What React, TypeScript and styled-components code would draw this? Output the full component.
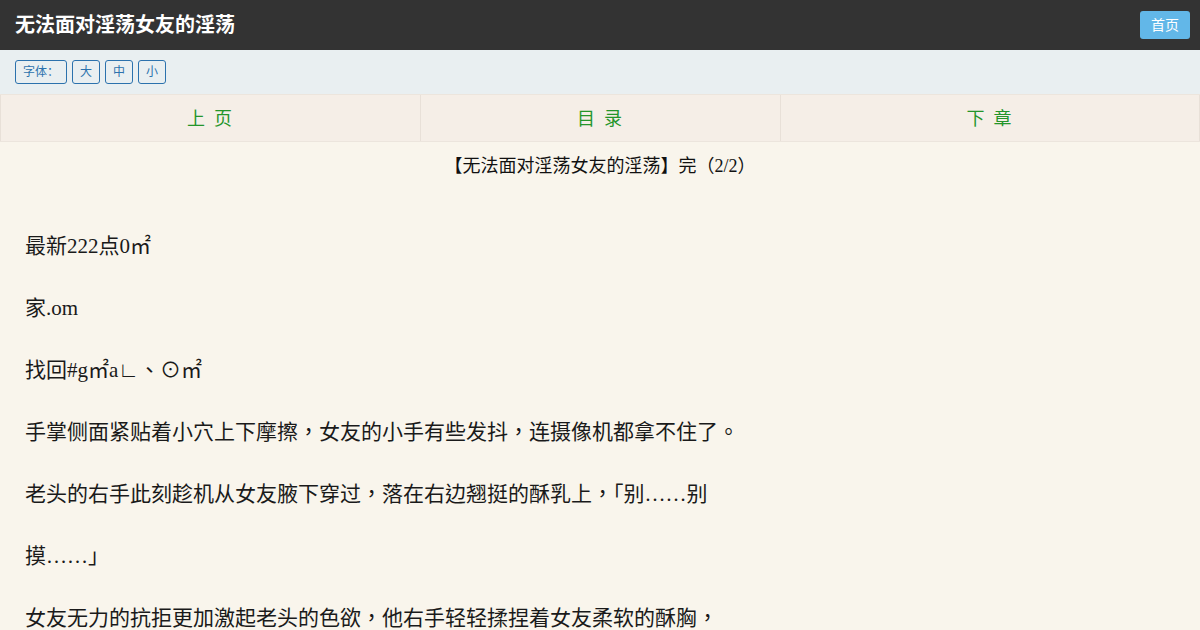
import React from "react";
import styled, { createGlobalStyle } from "styled-components";

const GlobalStyle = createGlobalStyle`
  html, body {
    margin: 0;
    padding: 0;
    background: #f9f5ec;
  }
  body {
    font-family: "Liberation Sans", "Noto Sans CJK SC", sans-serif;
  }
`;

const lines = [
  "最新222点0㎡",
  "家.om",
  "找回#g㎡a∟、⊙㎡",
  "手掌侧面紧贴着小穴上下摩擦，女友的小手有些发抖，连摄像机都拿不住了。",
  "老头的右手此刻趁机从女友腋下穿过，落在右边翘挺的酥乳上，「别……别",
  "摸……」",
  "女友无力的抗拒更加激起老头的色欲，他右手轻轻揉捏着女友柔软的酥胸，",
];

const App = () => {
  return (
    <Page>
      <GlobalStyle />
      <Header>
        <Title>无法面对淫荡女友的淫荡</Title>
        <HomeButton>首页</HomeButton>
      </Header>
      <Toolbar>
        <FontButton>字体：</FontButton>
        <FontButton>大</FontButton>
        <FontButton>中</FontButton>
        <FontButton>小</FontButton>
      </Toolbar>
      <NavBar>
        <NavCell>上 页</NavCell>
        <NavCell>目 录</NavCell>
        <NavCell>下 章</NavCell>
      </NavBar>
      <ChapterTitle>【无法面对淫荡女友的淫荡】完（2/2）</ChapterTitle>
      <Content>
        {lines.map((line, i) => (
          <Line key={i}>{line}</Line>
        ))}
      </Content>
    </Page>
  );
};

const Page = styled.div`
  width: 1200px;
  min-height: 630px;
  background: #f9f5ec;
`;

const Header = styled.div`
  height: 50px;
  background: #333333;
  display: flex;
  align-items: center;
  justify-content: space-between;
  padding: 0 10px 0 15px;
`;

const Title = styled.h1`
  margin: 0;
  color: #ffffff;
  font-size: 20px;
  font-weight: bold;
  line-height: 50px;
`;

const HomeButton = styled.a`
  display: block;
  background: #62b7e8;
  color: #ffffff;
  font-size: 14px;
  line-height: 28px;
  padding: 0 11px;
  border-radius: 3px;
`;

const Toolbar = styled.div`
  height: 44px;
  background: #e9eff1;
  display: flex;
  align-items: center;
  gap: 5px;
  padding: 0 15px;
  box-sizing: border-box;
`;

const FontButton = styled.span`
  display: inline-block;
  line-height: 22px;
  padding: 0 7px;
  border: 1px solid #2c72ad;
  border-radius: 3px;
  color: #2c72ad;
  font-size: 12px;
`;

const NavBar = styled.div`
  display: grid;
  grid-template-columns: 420px 360px 420px;
  height: 48px;
  background: #f5eee7;
  box-sizing: border-box;
  border-top: 1px solid #ece5dd;
  border-bottom: 1px solid #ece5dd;
`;

const NavCell = styled.a`
  display: flex;
  align-items: center;
  justify-content: center;
  padding-bottom: 2px;
  color: #24952a;
  font-size: 18px;
  letter-spacing: 2px;
  border-left: 1px solid #e8e0d8;
  &:last-child {
    border-right: 1px solid #e8e0d8;
  }
`;

const ChapterTitle = styled.h2`
  margin: 0;
  text-align: center;
  font-size: 18px;
  font-weight: normal;
  line-height: 48px;
  color: #111;
  font-family: "Liberation Serif", "Noto Sans CJK TC", serif;
`;

const Content = styled.div`
  padding: 25px 25px 0;
  font-family: "Liberation Serif", "Noto Sans CJK TC", serif;
  font-size: 21px;
  color: #1a1a1a;
`;

const Line = styled.p`
  margin: 0;
  height: 62px;
  line-height: 62px;
  white-space: nowrap;
`;

export default App;
